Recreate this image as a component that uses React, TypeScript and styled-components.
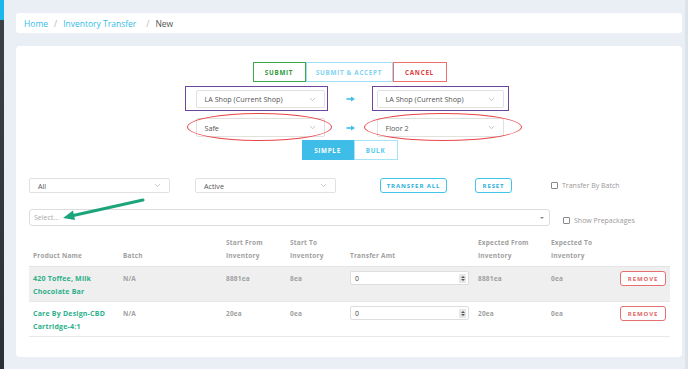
import styled, { createGlobalStyle } from 'styled-components';
import { ChevronDown } from 'lucide-react';

const GlobalStyle = createGlobalStyle`
  html, body {
    margin: 0;
    padding: 0;
    height: 369px;
    overflow: hidden;
    background: #e9eff5;
    font-family: "Open Sans", "Noto Sans", sans-serif;
  }
  * { box-sizing: border-box; }
`;

const Shell = styled.div`
  display: flex;
  height: 369px;
`;

const Sidebar = styled.div`
  width: 4px;
  background: linear-gradient(to bottom, #1cb8ec 0, #1cb8ec 20px, #3a4045 20px, #2a3035 100%);
`;

const Main = styled.div`
  flex: 1;
  padding: 13px 3px 0 12px;
  display: flex;
  flex-direction: column;
  gap: 13px;
`;

const Edge = styled.div`
  width: 3px;
  background: #dde3ea;
`;

const Crumbs = styled.nav`
  height: 20px;
  background: #fff;
  border-radius: 3px;
  display: flex;
  align-items: center;
  padding-left: 8px;
  font-size: 8.5px;
  color: #666;
`;

const Crumb = styled.a<{ $active?: boolean }>`
  color: ${p => (p.$active ? '#555' : '#35bde6')};
  text-decoration: none;
`;

const Slash = styled.span<{ $wide?: boolean }>`
  color: #b5b5b5;
  margin: ${p => (p.$wide ? '0 6px 0 10px' : '0 6px')};
`;

const Card = styled.main`
  height: 311px;
  background: #fff;
  border-radius: 4px;
  padding: 16px 12px 0 13px;
`;

const Center = styled.div`
  display: flex;
  flex-direction: column;
  align-items: center;
`;

const Group = styled.div<{ $top?: number }>`
  display: flex;
  margin-top: ${p => p.$top ?? 0}px;
`;

const tones = {
  green: { border: '#3da84a', text: '#2f9a3c', bg: '#fff' },
  light: { border: '#9fe0f6', text: '#7fd4f2', bg: '#fff' },
  red: { border: '#ef6f6f', text: '#e03c3c', bg: '#fff' },
  fill: { border: '#3fbde9', text: '#fff', bg: '#3fbde9' },
  cyan: { border: '#a5e3f7', text: '#55c8ef', bg: '#fff' },
};

const GroupBtn = styled.button<{ $tone: keyof typeof tones; $w: number }>`
  width: ${p => p.$w}px;
  height: 20px;
  border: 1px solid ${p => tones[p.$tone].border};
  background: ${p => tones[p.$tone].bg};
  color: ${p => tones[p.$tone].text};
  font-family: inherit;
  font-size: 6.3px;
  font-weight: 700;
  letter-spacing: 0.7px;
  padding: 0;
`;

const PairRow = styled.div<{ $top: number }>`
  display: flex;
  align-items: center;
  gap: 13px;
  margin-top: ${p => p.$top}px;
`;

const ArrowSlot = styled.span`
  width: 26px;
  display: flex;
  justify-content: center;
`;

const Holder = styled.div`
  position: relative;
`;

const Frame = styled.div<{ $l: number; $r: number; $t: number; $b: number; $oval?: boolean }>`
  position: absolute;
  left: ${p => p.$l}px;
  right: ${p => p.$r}px;
  top: ${p => p.$t}px;
  bottom: ${p => p.$b}px;
  border: ${p => (p.$oval ? '1.2px solid #e8474a' : '1.6px solid #6e449d')};
  border-radius: ${p => (p.$oval ? '50%' : '0')};
  pointer-events: none;
`;

const Select = styled.div<{ $w: number; $h: number }>`
  width: ${p => p.$w}px;
  height: ${p => p.$h}px;
  border: 1px solid #e1e1e1;
  border-radius: 2px;
  background: #fff;
  display: flex;
  align-items: center;
  justify-content: space-between;
  padding: 0 7px 0 8px;
  font-size: 7.2px;
  color: #555;
`;

const Chevron = styled(ChevronDown)`
  width: 9px;
  height: 9px;
  color: #999;
  stroke-width: 1.5;
`;

const FilterRow = styled.div`
  display: flex;
  align-items: center;
  margin-top: 18px;
`;

const Spacer = styled.div<{ $w: number }>`
  width: ${p => p.$w}px;
`;

const Outline = styled.button<{ $w: number; $ml: number; $tone: 'cyan' | 'red' }>`
  width: ${p => p.$w}px;
  height: 15px;
  margin-left: ${p => p.$ml}px;
  border: 1.5px solid ${p => (p.$tone === 'cyan' ? '#3ec6ea' : '#e57070')};
  border-radius: 3px;
  background: #fff;
  color: ${p => (p.$tone === 'cyan' ? '#27b2da' : '#e06464')};
  font-family: inherit;
  font-size: 6px;
  font-weight: 700;
  letter-spacing: 0.9px;
  padding: 0;
`;

const Check = styled.label<{ $ml: number; $top?: number }>`
  display: flex;
  align-items: center;
  gap: 4px;
  margin-left: ${p => p.$ml}px;
  margin-top: ${p => p.$top ?? 0}px;
  font-size: 7px;
  color: #999;
`;

const Box = styled.span`
  width: 7px;
  height: 7px;
  border: 1px solid #888;
  border-radius: 1px;
  background: #fff;
`;

const SearchRow = styled.div`
  display: flex;
  align-items: center;
  margin-top: 16px;
  position: relative;
`;

const Search = styled.div`
  width: 521px;
  height: 17px;
  border: 1px solid #ddd;
  border-radius: 3px;
  display: flex;
  align-items: center;
  justify-content: space-between;
  padding: 0 5px 0 4px;
  font-size: 7px;
  color: #aaa;
`;

const Caret = styled.span`
  width: 0;
  height: 0;
  border-left: 2.5px solid transparent;
  border-right: 2.5px solid transparent;
  border-top: 2.5px solid #888;
`;

const Pointer = styled.svg`
  position: absolute;
  left: 28px;
  top: -14px;
`;

const Table = styled.div`
  margin-top: 10px;
  width: 641px;
`;

const cols = '90px 103px 64px 60px 128px 73px 66px 57px';

const HeadRow = styled.div`
  display: grid;
  grid-template-columns: ${cols};
  align-items: end;
  border-bottom: 1px solid #e4e4e4;
  padding-bottom: 4px;
`;

const Th = styled.div`
  font-size: 6.5px;
  font-weight: 700;
  color: #a0a0a0;
  line-height: 13px;
  padding-left: 4px;
  letter-spacing: 0.2px;
`;

const Row = styled.div<{ $shade?: boolean }>`
  display: grid;
  grid-template-columns: ${cols};
  height: 35px;
  padding-top: 5px;
  background: ${p => (p.$shade ? '#efefef' : '#fff')};
  border-bottom: 1px solid #e8e8e8;
`;

const Td = styled.div<{ $name?: boolean }>`
  font-size: ${p => (p.$name ? '7px' : '6.5px')};
  font-weight: 700;
  color: ${p => (p.$name ? '#2bb08a' : '#a0a0a0')};
  line-height: 13px;
  padding-left: 4px;
  letter-spacing: 0.2px;
`;

const Amount = styled.div`
  width: 119px;
  height: 14px;
  margin-top: -1px;
  border: 1px solid #ddd;
  border-radius: 2px;
  background: #fff;
  display: flex;
  align-items: center;
  justify-content: space-between;
  padding: 0 2px 0 4px;
  font-size: 7px;
  font-weight: 400;
  color: #444;
`;

const Spinner = styled.span`
  width: 7px;
  height: 9px;
  background: #e6e6e6;
  border-radius: 1px;
  display: flex;
  flex-direction: column;
  align-items: center;
  justify-content: center;
  gap: 1px;
`;

const Tri = styled.span<{ $up?: boolean }>`
  width: 0;
  height: 0;
  border-left: 2px solid transparent;
  border-right: 2px solid transparent;
  ${p => (p.$up ? 'border-bottom: 2px solid #555;' : 'border-top: 2px solid #555;')}
`;

const RemoveCell = styled.div`
  display: flex;
  justify-content: flex-end;
  padding-right: 4px;
  margin-top: -1px;
`;

const rows = [
  { name: ['420 Toffee, Milk', 'Chocolate Bar'], from: '8881ea', to: '8ea', expFrom: '8881ea', shade: true },
  { name: ['Care By Design-CBD', 'Cartridge-4:1'], from: '20ea', to: '0ea', expFrom: '20ea', shade: false },
];

function ToArrow() {
  return (
    <ArrowSlot>
      <svg width="9" height="6" viewBox="0 0 9 6">
        <line x1="0.5" y1="3" x2="6" y2="3" stroke="#3fbde9" strokeWidth="1.6" />
        <polygon points="5,0.6 9,3 5,5.4" fill="#3fbde9" />
      </svg>
    </ArrowSlot>
  );
}

export default function App() {
  return (
    <Shell>
      <GlobalStyle />
      <Sidebar />
      <Main>
        <Crumbs>
          <Crumb href="#">Home</Crumb>
          <Slash>/</Slash>
          <Crumb href="#">Inventory Transfer</Crumb>
          <Slash $wide>/</Slash>
          <Crumb $active>New</Crumb>
        </Crumbs>

        <Card>
          <Center>
            <Group>
              <GroupBtn $tone="green" $w={53}>SUBMIT</GroupBtn>
              <GroupBtn $tone="light" $w={87}>SUBMIT &amp; ACCEPT</GroupBtn>
              <GroupBtn $tone="red" $w={54}>CANCEL</GroupBtn>
            </Group>

            <PairRow $top={8}>
              <Holder>
                <Frame $l={-11} $r={-3} $t={-4} $b={-3} />
                <Select $w={129} $h={18}>LA Shop (Current Shop)<Chevron /></Select>
              </Holder>
              <ToArrow />
              <Holder>
                <Frame $l={-5} $r={-5} $t={-4} $b={-3} />
                <Select $w={127} $h={18}>LA Shop (Current Shop)<Chevron /></Select>
              </Holder>
            </PairRow>

            <PairRow $top={10}>
              <Holder>
                <Frame $oval $l={-9} $r={-7} $t={-5} $b={-4} />
                <Select $w={129} $h={19}>Safe<Chevron /></Select>
              </Holder>
              <ToArrow />
              <Holder>
                <Frame $oval $l={-13} $r={-18} $t={-5} $b={-4} />
                <Select $w={127} $h={19}>Floor 2<Chevron /></Select>
              </Holder>
            </PairRow>

            <Group $top={3}>
              <GroupBtn $tone="fill" $w={52}>SIMPLE</GroupBtn>
              <GroupBtn $tone="cyan" $w={44}>BULK</GroupBtn>
            </Group>
          </Center>

          <FilterRow>
            <Select $w={141} $h={15}>All<Chevron /></Select>
            <Spacer $w={25} />
            <Select $w={141} $h={15}>Active<Chevron /></Select>
            <Outline $tone="cyan" $w={67} $ml={44}>TRANSFER ALL</Outline>
            <Outline $tone="cyan" $w={37} $ml={28}>RESET</Outline>
            <Check $ml={39}><Box />Transfer By Batch</Check>
          </FilterRow>

          <SearchRow>
            <Search>Select...<Caret /></Search>
            <Check $ml={13} $top={6}><Box />Show Prepackages</Check>
            <Pointer width="95" height="30" viewBox="0 0 95 30">
              <line x1="86" y1="5" x2="14" y2="21" stroke="#1ca57b" strokeWidth="3" strokeLinecap="round" />
              <polygon points="6,23 16,15.5 18,25" fill="#1ca57b" />
            </Pointer>
          </SearchRow>

          <Table>
            <HeadRow>
              <Th>Product Name</Th>
              <Th>Batch</Th>
              <Th>Start From<br />Inventory</Th>
              <Th>Start To<br />Inventory</Th>
              <Th>Transfer Amt</Th>
              <Th>Expected From<br />Inventory</Th>
              <Th>Expected To<br />Inventory</Th>
              <Th />
            </HeadRow>
            {rows.map(r => (
              <Row key={r.name[0]} $shade={r.shade}>
                <Td $name>{r.name[0]}<br />{r.name[1]}</Td>
                <Td>N/A</Td>
                <Td>{r.from}</Td>
                <Td>{r.to}</Td>
                <Td>
                  <Amount>0<Spinner><Tri $up /><Tri /></Spinner></Amount>
                </Td>
                <Td>{r.expFrom}</Td>
                <Td>0ea</Td>
                <RemoveCell>
                  <Outline $tone="red" $w={46} $ml={0}>REMOVE</Outline>
                </RemoveCell>
              </Row>
            ))}
          </Table>
        </Card>
      </Main>
      <Edge />
    </Shell>
  );
}
